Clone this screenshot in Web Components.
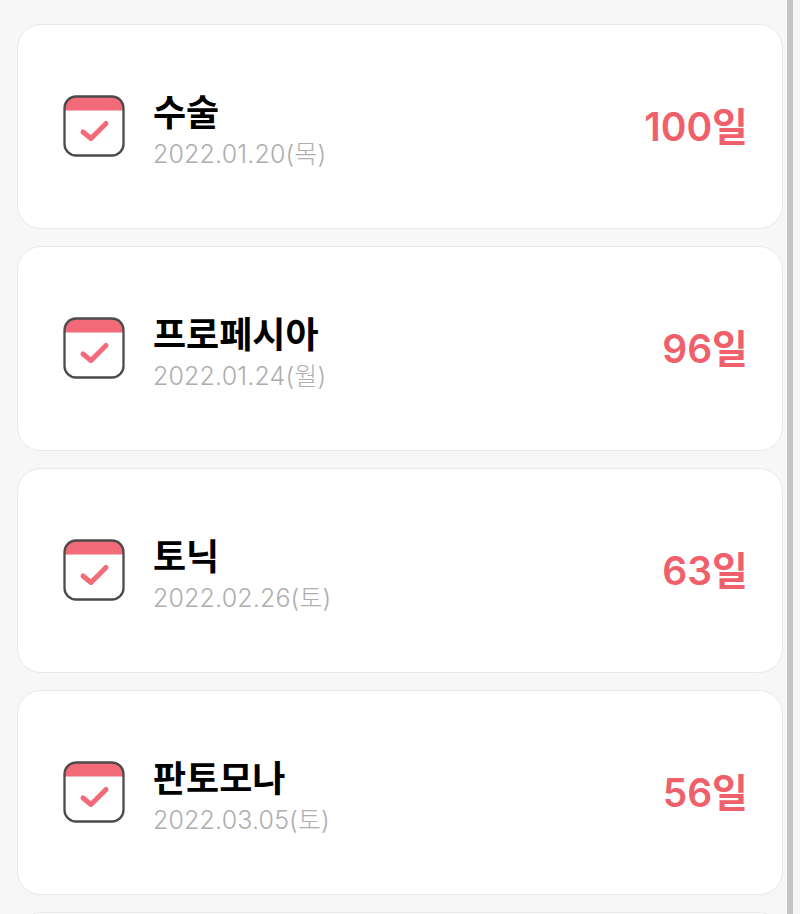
<!DOCTYPE html>
<html lang="ko">
<head>
<meta charset="utf-8">
<title>D-day</title>
<style>
  html, body { margin: 0; height: 100%; overflow: hidden; background: #f7f7f7; }
</style>
</head>
<body>
<dday-list>
  <dday-card name="수술" date="2022.01.20(목)" days="100일"></dday-card>
  <dday-card name="프로페시아" date="2022.01.24(월)" days="96일"></dday-card>
  <dday-card name="토닉" date="2022.02.26(토)" days="63일"></dday-card>
  <dday-card name="판토모나" date="2022.03.05(토)" days="56일"></dday-card>
  <dday-card name="" date="" days=""></dday-card>
</dday-list>

<script>
// Calendar icon
const iconTemplate = document.createElement('template');
iconTemplate.innerHTML = `
    <style>
        :host{
            display: block;
            width: 62px;
            height: 62px;
        }
        svg{
            display: block;
        }
    </style>
    <svg width="62" height="62" viewBox="0 0 62 62" fill="none">
        <path d="M1.5 15.5V13A11.5 11.5 0 0 1 13 1.5H49A11.5 11.5 0 0 1 60.5 13V15.5Z" fill="#f36b79"/>
        <rect x="1.5" y="1.5" width="59" height="59" rx="11.5" stroke="#4d4a4b" stroke-width="2.3"/>
        <path d="M20 37L28 43.5L43 28.5" stroke="#f36b79" stroke-width="5" stroke-linecap="round" stroke-linejoin="round"/>
    </svg>
`;

class DdayIcon extends HTMLElement {
    constructor() {
        super();
        this.attachShadow({ mode: 'open' });
        this.shadowRoot.appendChild(iconTemplate.content.cloneNode(true));
    }
}
window.customElements.define('dday-icon', DdayIcon);

// Single card
const cardTemplate = document.createElement('template');
cardTemplate.innerHTML = `
    <style>
        :host{
            display: block;
            font-family: 'Inter', 'Noto Sans CJK KR', sans-serif;
        }
        .card{
            box-sizing: border-box;
            height: 205px;
            display: flex;
            align-items: center;
            padding: 0 34px 0 45px;
            background: #ffffff;
            border: 1px solid #e9e9e9;
            border-radius: 24px;
        }
        dday-icon{
            margin-right: 28px;
            margin-top: -2px;
        }
        .info{
            flex: 1;
            min-width: 0;
        }
        .name{
            font-size: 36px;
            font-weight: 700;
            line-height: 44px;
            color: #000000;
        }
        .date{
            font-size: 25px;
            font-weight: 300;
            line-height: 36px;
            letter-spacing: 0.15px;
            color: #aeaeae;
            margin-top: 1px;
            margin-bottom: -9px;
        }
        .days{
            font-size: 39px;
            font-weight: 600;
            color: #f0606b;
            line-height: 50px;
        }
    </style>
    <div class="card">
        <dday-icon></dday-icon>
        <div class="info">
            <div class="name"></div>
            <div class="date"></div>
        </div>
        <div class="days"></div>
    </div>
`;

class DdayCard extends HTMLElement {
    constructor() {
        super();
        this.attachShadow({ mode: 'open' });
        this.shadowRoot.appendChild(cardTemplate.content.cloneNode(true));
        this.shadowRoot.querySelector('.name').textContent = this.getAttribute('name');
        this.shadowRoot.querySelector('.date').textContent = this.getAttribute('date');
        this.shadowRoot.querySelector('.days').textContent = this.getAttribute('days');
    }
}
window.customElements.define('dday-card', DdayCard);

// List with the scrollbar strip on the right
const listTemplate = document.createElement('template');
listTemplate.innerHTML = `
    <style>
        :host{
            display: flex;
            height: 914px;
            overflow: hidden;
            background: #f7f7f7;
        }
        .cards{
            flex: none;
            width: 766px;
            margin-left: 17px;
            padding-top: 24px;
            display: flex;
            flex-direction: column;
            gap: 17px;
        }
        .track{
            flex: none;
            width: 6px;
            margin-left: 4px;
            background: #c4c4c4;
        }
    </style>
    <div class="cards"><slot></slot></div>
    <div class="track"></div>
`;

class DdayList extends HTMLElement {
    constructor() {
        super();
        this.attachShadow({ mode: 'open' });
        this.shadowRoot.appendChild(listTemplate.content.cloneNode(true));
    }
}
window.customElements.define('dday-list', DdayList);
</script>
</body>
</html>
